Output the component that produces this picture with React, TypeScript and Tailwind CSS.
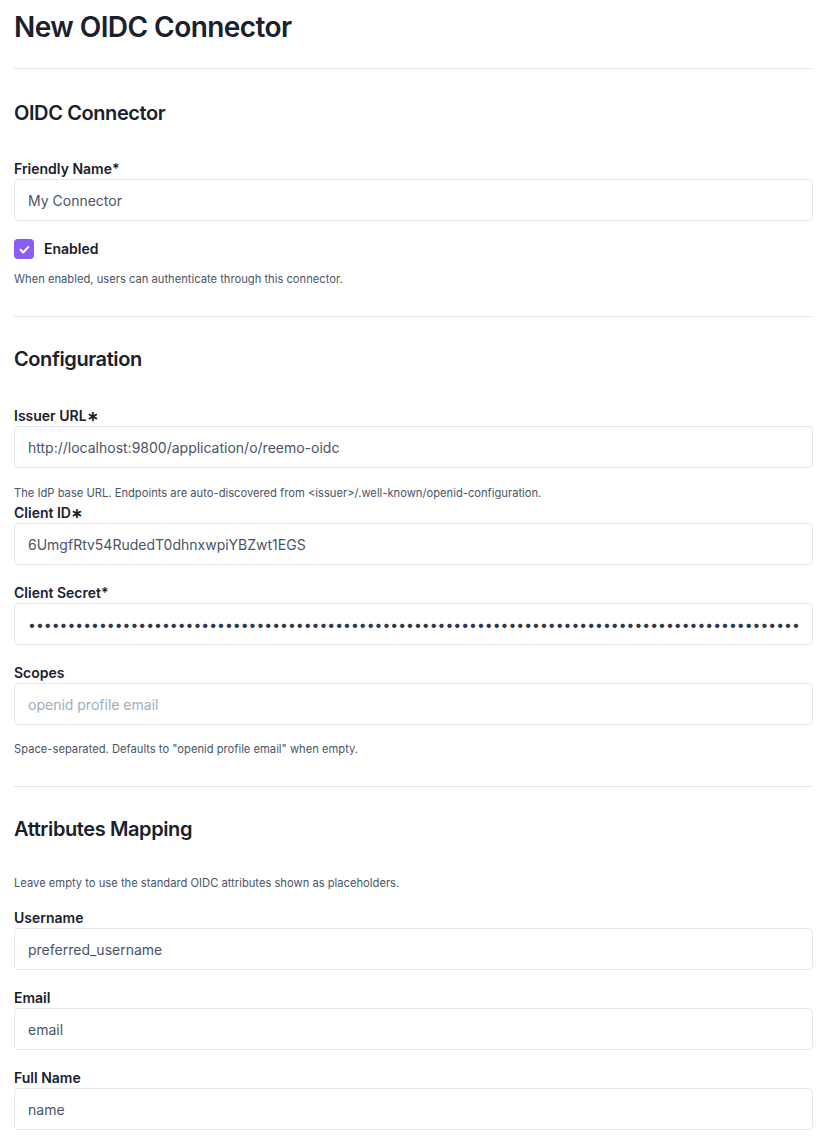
import { useState } from "react";

const font = { fontFamily: "Inter, 'Noto Sans', sans-serif" };

const Label = ({ text, className = "" }: { text: string; className?: string }) => (
  <label className={`block text-sm leading-5 font-semibold text-[#1a202c] ${className}`}>{text}</label>
);

const Help = ({ text, className = "" }: { text: string; className?: string }) => (
  <p className={`text-[0.7rem] leading-4 text-[#4a5568] ${className}`}>{text}</p>
);

const Field = ({
  label,
  value,
  placeholder,
  type = "text",
  className = "",
}: {
  label: string;
  value?: string;
  placeholder?: string;
  type?: string;
  className?: string;
}) => (
  <div className={className}>
    <Label text={label} />
    <input
      type={type}
      defaultValue={value}
      placeholder={placeholder}
      className={`block w-full h-[42px] px-[13px] rounded border border-[#e2e8f0] bg-white text-sm placeholder:text-[#a0aec0] outline-none ${
        type === "password" ? "text-[#2d3748]" : "text-[#4a5568]"
      }`}
    />
  </div>
);

export default function App() {
  const [enabled, setEnabled] = useState(true);

  return (
    <div className="min-h-screen bg-white pt-[9px] pl-[14px] pr-[11px] pb-8" style={font}>
      <h1 className="text-[28px] leading-9 font-semibold tracking-[-0.02em] text-[#1a202c]">New OIDC Connector</h1>
      <hr className="mt-[23px] border-[#e2e8f0]" />

      <h2 className="mt-[30px] text-xl leading-7 font-semibold tracking-[-0.02em] text-[#1a202c]">OIDC Connector</h2>
      <Field className="mt-[32px]" label="Friendly Name*" value="My Connector" />
      <div className="mt-[18px] flex items-center gap-[10px]">
        <button
          onClick={() => setEnabled(!enabled)}
          className={`w-5 h-5 rounded flex items-center justify-center ${enabled ? "bg-[#8b5cf6]" : "border border-[#cbd5e0] bg-white"}`}
        >
          {enabled && (
            <svg viewBox="0 0 20 20" className="w-[13px] h-[13px]" fill="none" stroke="white" strokeWidth="3.2" strokeLinecap="round" strokeLinejoin="round">
              <path d="M4 10.5l4 4 8-8.5" />
            </svg>
          )}
        </button>
        <span className="text-sm leading-5 font-semibold text-[#1a202c]">Enabled</span>
      </div>
      <Help className="mt-[12px]" text="When enabled, users can authenticate through this connector." />
      <hr className="mt-[29px] border-[#e2e8f0]" />

      <h2 className="mt-[28px] text-xl leading-7 font-semibold tracking-[-0.02em] text-[#1a202c]">Configuration</h2>
      <Field className="mt-[33px]" label="Issuer URL∗" value="http://localhost:9800/application/o/reemo-oidc" />
      <Help className="mt-[17px]" text="The IdP base URL. Endpoints are auto-discovered from <issuer>/.well-known/openid-configuration." />
      <Field className="mt-[2px]" label="Client ID∗" value="6UmgfRtv54RudedT0dhnxwpiYBZwt1EGS" />
      <Field className="mt-[18px]" label="Client Secret*" type="password" value={"x".repeat(98)} />
      <Field className="mt-[18px]" label="Scopes" placeholder="openid profile email" />
      <Help className="mt-[16px]" text={'Space-separated. Defaults to "openid profile email" when empty.'} />
      <hr className="mt-[29px] border-[#e2e8f0]" />

      <h2 className="mt-[28px] text-xl leading-7 font-semibold tracking-[-0.02em] text-[#1a202c]">Attributes Mapping</h2>
      <Help className="mt-[32px]" text="Leave empty to use the standard OIDC attributes shown as placeholders." />
      <Field className="mt-[17px]" label="Username" value="preferred_username" />
      <Field className="mt-[18px]" label="Email" value="email" />
      <Field className="mt-[18px]" label="Full Name" value="name" />
    </div>
  );
}
